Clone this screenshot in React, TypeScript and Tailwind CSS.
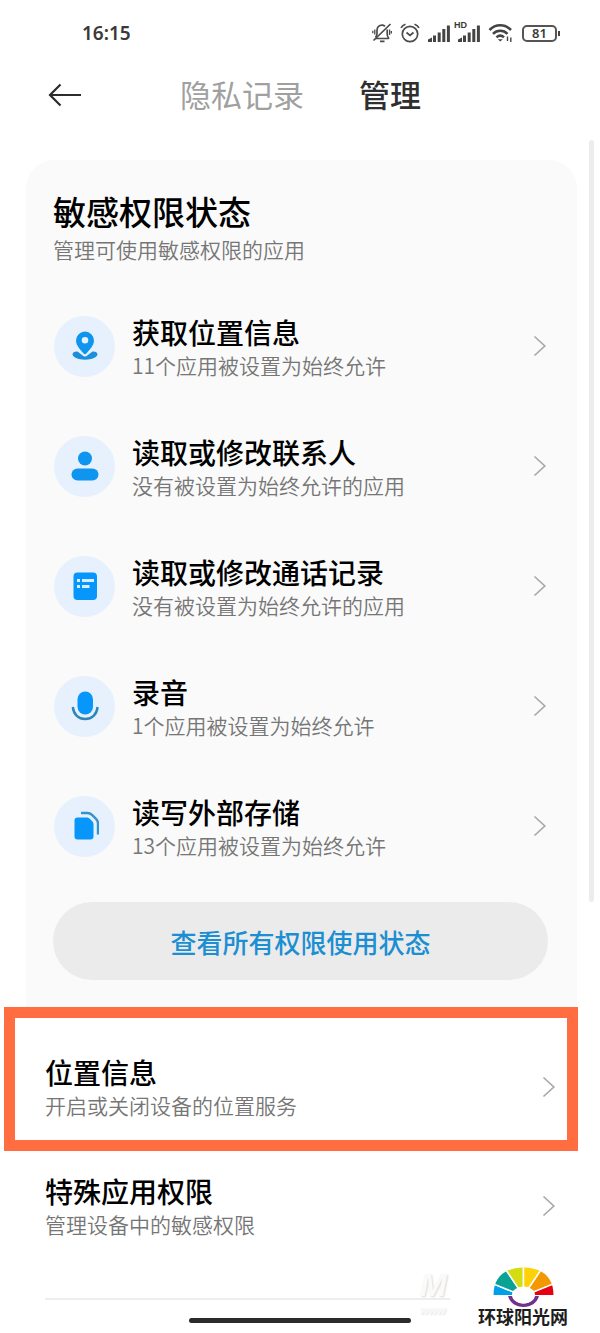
import type { ReactNode } from 'react';

const BLUE = '#0e95ef';

function PinIcon() {
  return (
    <svg width="28" height="30" viewBox="0 0 28 30" aria-hidden="true">
      <path
        d="M6.500 20.500C3.500 20.300 1.500 21.500 1.500 23.300C1.500 26.300 7 28.700 14 28.700S26.500 26.300 26.500 23.300C26.500 21.500 24.500 20.300 21.500 20.500L15.600 25a2.600 2.600 0 0 1-3.200 0Z"
        fill="#1b8fdc"
      />
      <path
        fillRule="evenodd"
        d="M14 0.500a9 9 0 0 1 9 9c0 5-4.500 9.500-7.400 12.700a2.100 2.100 0 0 1-3.200 0C9.500 19 5 14.500 5 9.500a9 9 0 0 1 9-9Zm0 5.500a3.300 3.300 0 1 0 0 6.600 3.300 3.300 0 0 0 0-6.600Z"
        fill={BLUE}
      />
    </svg>
  );
}

function PersonIcon() {
  return (
    <svg width="28" height="30" viewBox="0 0 28 30" aria-hidden="true">
      <circle cx="14" cy="7.500" r="7" fill={BLUE} />
      <rect x="0.500" y="17.500" width="27" height="12" rx="6" fill={BLUE} />
    </svg>
  );
}

function CallLogIcon() {
  return (
    <svg width="28" height="30" viewBox="0 0 28 30" aria-hidden="true">
      <rect x="2.500" y="1.500" width="23.500" height="27.500" rx="4" fill="#0796fb" />
      <g fill="#d9eefe">
        <rect x="6" y="8" width="3" height="3" />
        <rect x="11" y="8" width="12" height="3" />
        <rect x="6" y="14" width="3" height="3" />
        <rect x="11" y="14" width="7.500" height="3" />
      </g>
    </svg>
  );
}

function MicIcon() {
  return (
    <svg width="28" height="30" viewBox="0 0 28 30" aria-hidden="true">
      <rect x="6.500" y="0.500" width="15.500" height="23" rx="7.750" fill="#0796fb" />
      <path
        d="M1.800 16C2.600 23.500 7.500 28 14.200 28s11.600-4.500 12.400-12"
        fill="none"
        stroke="#2d86b8"
        strokeWidth="2.400"
      />
    </svg>
  );
}

function FilesIcon() {
  return (
    <svg width="28" height="30" viewBox="0 0 28 30" aria-hidden="true">
      <path
        d="M6.500 6.500H15.500C17 6.500 18 7 19 8L21 10C22 11 22.500 12 22.500 13.500V25.500a3 3 0 0 1-3 3H6.500a3 3 0 0 1-3-3V9.500a3 3 0 0 1 3-3Z"
        fill="#0796fb"
      />
      <path
        d="M10 2H16.500C18.500 2 19.500 2.400 21 3.900L25 7.900C26.500 9.400 27 10.500 27 12.500V23.500"
        fill="none"
        stroke="#3492cf"
        strokeWidth="2.400"
      />
    </svg>
  );
}

function Chevron() {
  return (
    <svg className="shrink-0" width="14" height="22" viewBox="0 0 14 22" fill="none" stroke="#a9a9a9" strokeWidth="1.700" aria-hidden="true">
      <path d="M1.500 1.500 11.800 11 1.500 20.500" />
    </svg>
  );
}

function SignalBars() {
  return (
    <svg width="22" height="17" viewBox="0 0 22 17" fill="#444" aria-hidden="true">
      <path d="M0 17V14.500L4 12.500V17Z" />
      <rect x="5" y="10.500" width="3" height="6.500" />
      <rect x="9.700" y="7.500" width="3" height="9.500" />
      <rect x="14.300" y="4" width="3" height="13" />
      <rect x="18.900" y="0.500" width="3" height="16.500" />
    </svg>
  );
}

function StatusBar() {
  return (
    <div className="flex h-[66px] items-center justify-between pr-10 pl-[82px] text-[#3a3a3a]">
      <time className="font-['Noto_Sans','Noto_Sans_CJK_SC',sans-serif] text-[19px] font-semibold">16:15</time>
      <div className="flex items-center gap-2">
        <svg width="20" height="20" viewBox="0 0 20 20" fill="none" stroke="#4a4a4a" strokeWidth="1.700" aria-hidden="true">
          <path d="M3.500 15.500H16.200C16.800 15.500 16.800 15 16.300 14.500C15.300 13.500 15.200 12.500 15.200 10.500V6.500M13 3.300C12 2.400 10.800 2.100 10 2.100C7 2.100 5 4.500 5 7.500V10.500C5 12.300 4.500 13.300 3.500 14.300" />
          <path d="M18.500 1 1.500 17.500M8 18.300H12.500" />
          <path d="M2.800 6.500V11.500M0.800 7.800V10.300M17.600 6.500V12M19.400 8V10.500" strokeWidth="1.300" />
        </svg>
        <svg width="20" height="20" viewBox="0 0 20 20" fill="none" stroke="#4a4a4a" strokeWidth="1.700" aria-hidden="true">
          <circle cx="10" cy="11" r="7.700" />
          <path d="M6.500 9.500 10 12.500 13.500 9.500M1 4.800C2 3 3.300 1.800 5.500 1.200M19 4.800C18 3 16.700 1.800 14.500 1.200" />
        </svg>
        <SignalBars />
        <div className="relative">
          <SignalBars />
          <span className="absolute -top-1 -left-1 font-['Liberation_Sans',sans-serif] text-[9px] leading-[9px] font-bold">HD</span>
        </div>
        <svg width="26" height="20" viewBox="0 0 26 20" fill="none" stroke="#444" strokeWidth="2.600" aria-hidden="true">
          <path d="M1.500 7C7.500 0.700 17 0.700 23 7M5 10.800C9 6.800 15.500 6.800 19.500 10.800M8.500 14.400C11 12 13.500 12 16 14.400" />
          <path d="M12.300 18.500 9.800 16.200H14.800Z" fill="#444" stroke="none" />
          <path d="M19.500 13.500V18M22.800 14.500V19" strokeWidth="1.400" />
        </svg>
        <div className="flex items-center">
          <span className="flex h-[17px] w-[35px] items-center justify-center rounded-[5px] border-2 border-[#555] font-['Noto_Sans',sans-serif] text-[13px] leading-none font-semibold">
            81
          </span>
          <span className="ml-px h-[5px] w-[2px] bg-[#444]" />
        </div>
      </div>
    </div>
  );
}

function RowText({ title, detail }: { title: string; detail: string }) {
  return (
    <span className="flex min-w-0 flex-1 flex-col">
      <span className="text-[28px] leading-9 font-medium text-black">{title}</span>
      <span className="text-[21px] leading-[30px] font-[350] text-[#767676]">{detail}</span>
    </span>
  );
}

type Permission = { title: string; detail: string; icon: ReactNode };

const permissions: Permission[] = [
  { title: '获取位置信息', detail: '11个应用被设置为始终允许', icon: <PinIcon /> },
  { title: '读取或修改联系人', detail: '没有被设置为始终允许的应用', icon: <PersonIcon /> },
  { title: '读取或修改通话记录', detail: '没有被设置为始终允许的应用', icon: <CallLogIcon /> },
  { title: '录音', detail: '1个应用被设置为始终允许', icon: <MicIcon /> },
  { title: '读写外部存储', detail: '13个应用被设置为始终允许', icon: <FilesIcon /> },
];

function SiteLogo() {
  return (
    <div className="absolute right-0 bottom-0 flex w-[150px] flex-col items-center bg-white pt-1 pr-1 pb-2">
      <svg width="64" height="40" viewBox="-2 0 64 40" aria-hidden="true">
        <clipPath id="fan">
          <path d="M0.500 28C0.500 10 12 0.500 30.500 0.500S60.500 10 60.500 28Z" />
        </clipPath>
        <g clipPath="url(#fan)" stroke="#fff" strokeWidth="1.500">
          <path d="M30.500 29H-12V12Z" fill="#00a0e9" />
          <path d="M30.500 29-12 12 3-12Z" fill="#0aa295" />
          <path d="M30.500 29 3-12H30.500Z" fill="#d4dc12" />
          <path d="M30.500 29V-12H58Z" fill="#fdd20a" />
          <path d="M30.500 29 58-12 73 12Z" fill="#f39800" />
          <path d="M30.500 29 73 12V29Z" fill="#e60012" />
        </g>
        <path d="M15 29C17 36 23 40 30.500 40S44 36 46 29H41.500C39.500 34 36 36.500 30.500 36.500S21.500 34 19.500 29Z" fill="#73308c" />
        <ellipse cx="30.500" cy="28" rx="11.500" ry="8.500" fill="#fff" />
      </svg>
      <span className="text-[18px] leading-[18px] font-bold text-[#1d1d1d]">环球阳光网</span>
    </div>
  );
}

export default function App() {
  return (
    <div className="relative min-h-screen overflow-hidden bg-white font-['Noto_Sans_CJK_SC',sans-serif]">
      <StatusBar />

      <header className="flex h-[58px] items-center pl-12 text-[31px] leading-none">
        <button type="button" aria-label="返回">
          <svg width="34" height="24" viewBox="0 0 34 24" fill="none" stroke="#2c2c2c" strokeWidth="2.200" aria-hidden="true">
            <path d="M33 12H2M12.500 1.500 2 12 12.500 22.500" />
          </svg>
        </button>
        <nav className="ml-[98px] flex gap-[55px] pb-1">
          <button type="button" className="text-[#a0a0a0]">隐私记录</button>
          <button type="button" className="font-medium text-[#2f2f2f]" aria-current="page">管理</button>
        </nav>
      </header>

      <main className="mt-9">
        <section className="mr-[23px] ml-[26px] rounded-t-[28px] bg-[#fafafa] pt-[29px] pr-[29px] pb-[27px] pl-[27px]">
          <h1 className="text-[33px] leading-[44px] font-medium text-black">敏感权限状态</h1>
          <p className="mb-[21px] text-[21px] leading-8 font-[350] text-[#767676]">管理可使用敏感权限的应用</p>

          <ul>
            {permissions.map((p) => (
              <li key={p.title}>
                <button type="button" className="flex h-[120px] w-full items-center pr-px text-left">
                  <span className="mr-[17px] ml-px flex size-[61px] shrink-0 items-center justify-center rounded-full bg-[#e6f1fd]">
                    {p.icon}
                  </span>
                  <span className="flex flex-1 pt-0.5">
                    <RowText title={p.title} detail={p.detail} />
                  </span>
                  <Chevron />
                </button>
              </li>
            ))}
          </ul>

          <button type="button" className="mt-4 h-[78px] w-full rounded-full bg-[#ebebeb] text-[26px] font-medium text-[#1b8fd2]">
            查看所有权限使用状态
          </button>
        </section>

        <div className="mr-[22px] ml-1 border-[11px] border-[#ff6d41] bg-white">
          <button type="button" className="flex w-full items-center pt-9 pr-[11px] pb-5 pl-[30px] text-left">
            <RowText title="位置信息" detail="开启或关闭设备的位置服务" />
            <Chevron />
          </button>
        </div>

        <div className="mr-11 ml-[45px] border-b-2 border-[#eeeeee] pt-[22px] pb-[59px]">
          <button type="button" className="flex w-full items-center text-left">
            <RowText title="特殊应用权限" detail="管理设备中的敏感权限" />
            <Chevron />
          </button>
        </div>
      </main>

      <div className="mx-auto mt-[18px] mb-2.5 h-[5px] w-[222px] rounded-full bg-[#2b2b2b]" />

      <div className="absolute top-[140px] right-[6px] h-[762px] w-[5px] rounded-full bg-[#ececec]" />
      <div className="absolute right-[150px] bottom-4 flex w-[30px] flex-col font-['Liberation_Sans',sans-serif] font-bold text-[#fafafa] italic" aria-hidden="true">
        <span className="text-[32px] leading-[36px] text-shadow-[1px_1px_2px_#d8d8d8]">M</span>
        <span className="text-[11px] leading-[14px] text-shadow-[1px_1px_2px_#e2e2e2]">www</span>
      </div>
      <SiteLogo />
    </div>
  );
}
